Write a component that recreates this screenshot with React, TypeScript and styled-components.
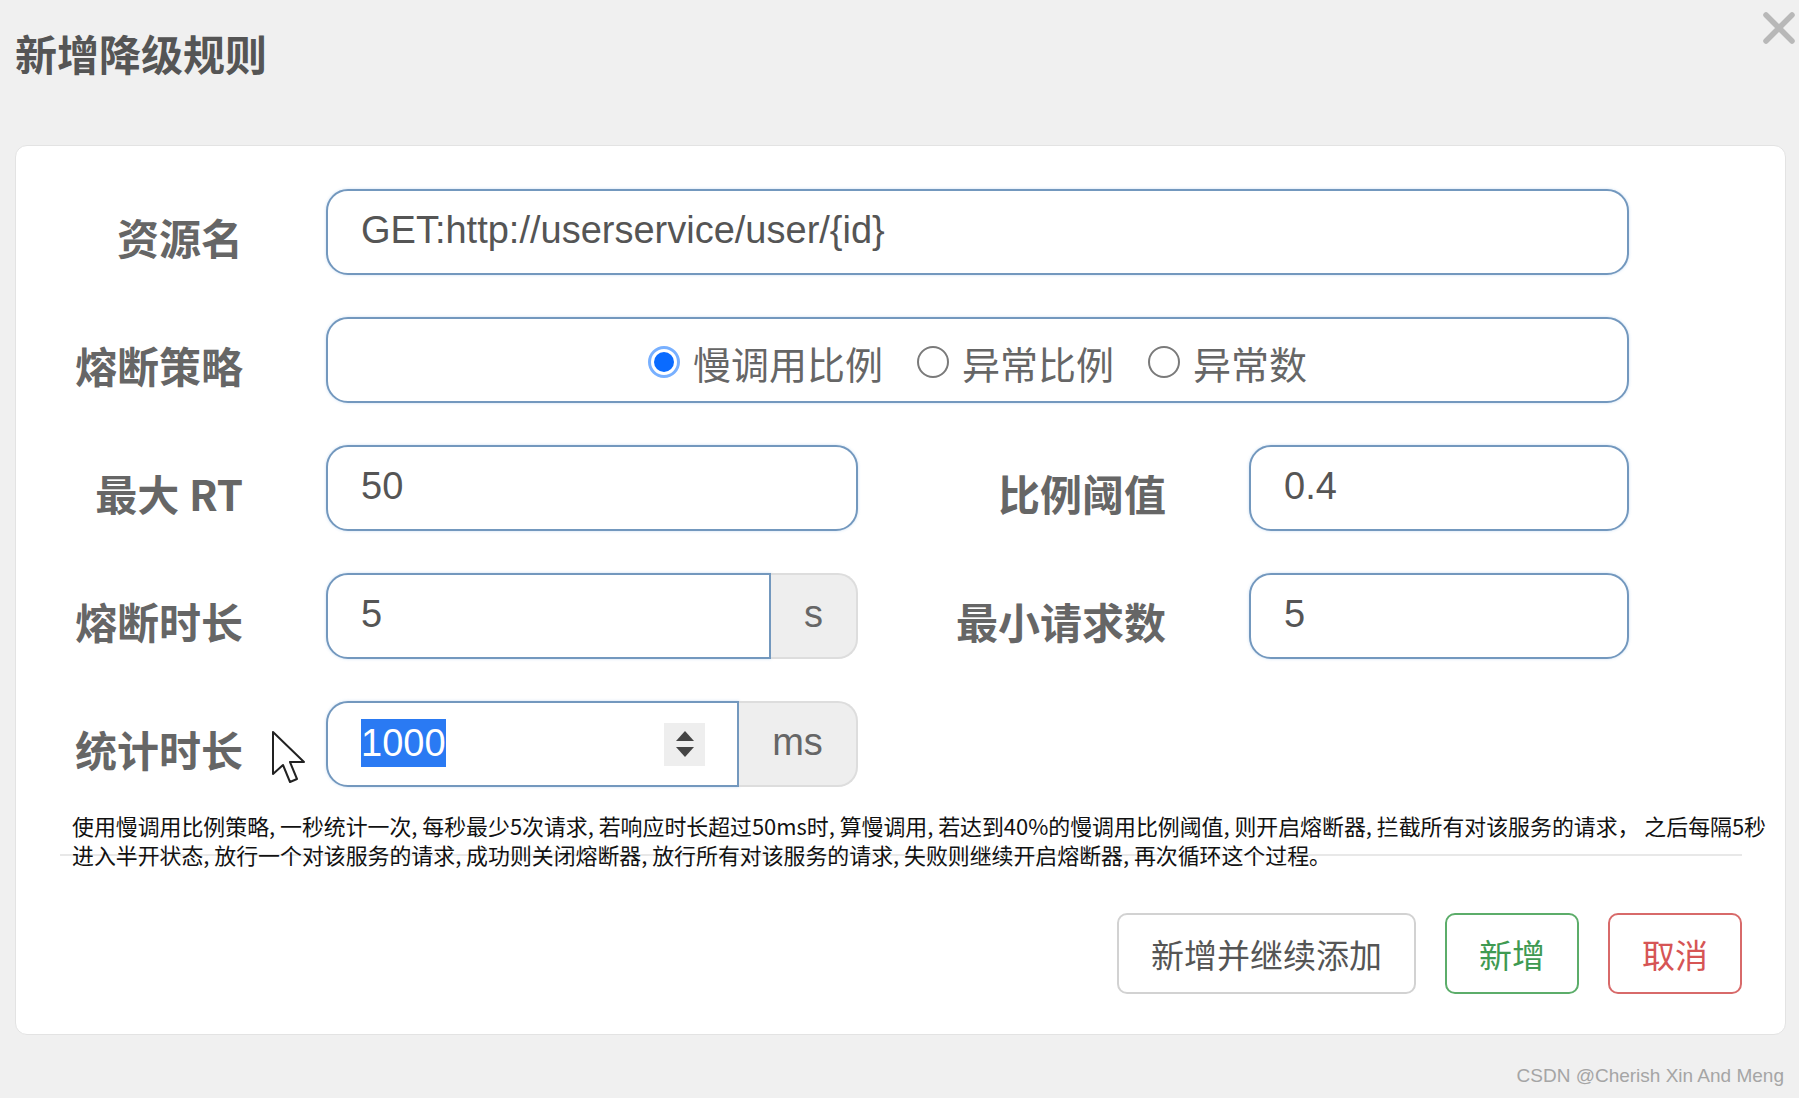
import React from "react";
import styled, { createGlobalStyle, css } from "styled-components";

const GlobalStyle = createGlobalStyle`
  html, body { margin: 0; padding: 0; background: #f0f0f0; }
  body {
    font-family: "Noto Sans CJK SC", "Noto Sans", sans-serif;
    width: 1799px;
    height: 1098px;
    overflow: hidden;
  }
  * { box-sizing: border-box; }
`;

const Page = styled.div`
  display: flex;
  flex-direction: column;
  height: 1098px;
`;

const Header = styled.header`
  display: flex;
  justify-content: space-between;
  align-items: flex-start;
  height: 145px;
  padding: 11px 3px 0 15px;
`;

const Title = styled.h1`
  margin: 20px 0 0;
  font-size: 42px;
  line-height: 44px;
  font-weight: 700;
  color: #555;
`;

const CloseButton = styled.button`
  width: 34px;
  height: 34px;
  padding: 0;
  border: 0;
  background: none;
  display: flex;
  cursor: pointer;
`;

const Card = styled.section`
  margin: 0 13px 0 15px;
  background: #fff;
  border: 1px solid #e3e3e3;
  border-radius: 12px;
  padding: 43px 43px 40px 0;
  display: flex;
  flex-direction: column;
`;

const Form = styled.div`
  display: flex;
  flex-direction: column;
  gap: 42px;
  margin-right: 113px;
`;

const FormRow = styled.div`
  position: relative;
  display: grid;
  grid-template-columns: 227px 532px 1fr 380px;
  column-gap: 83px;
  align-items: center;
  height: 86px;
`;

const Label = styled.label`
  text-align: right;
  font-size: 42px;
  line-height: 42px;
  font-weight: 700;
  color: #666;
  padding-top: 10px;
  white-space: nowrap;
`;

const fieldBase = css`
  height: 86px;
  border: 2px solid #7398be;
  background: #fff;
  display: flex;
  align-items: center;
  font-family: "Liberation Sans", "Noto Sans CJK SC", sans-serif;
  font-size: 38px;
  color: #555;
  box-shadow: 0 0 3px rgba(102, 160, 220, 0.35);
`;

const Field = styled.div<{ $wide?: boolean }>`
  ${fieldBase};
  border-radius: 22px;
  padding: 0 33px 3px;
  ${(p) => p.$wide && css`grid-column: 2 / -1;`}
`;

const InputGroup = styled.div`
  display: flex;
  height: 86px;
`;

const GroupField = styled.div`
  ${fieldBase};
  flex: 1;
  border-radius: 22px 0 0 22px;
  padding: 0 32px 3px 33px;
`;

const Addon = styled.div<{ $w: number }>`
  width: ${(p) => p.$w}px;
  height: 86px;
  background: #eee;
  border: 2px solid #ddd;
  border-left: 0;
  border-radius: 0 20px 20px 0;
  display: flex;
  align-items: center;
  justify-content: center;
  padding-bottom: 3px;
  font-family: "Liberation Sans", sans-serif;
  font-size: 38px;
  color: #666;
`;

const Selected = styled.span`
  background: #2a7af3;
  color: #fff;
  padding: 2px 0;
  line-height: 44px;
`;

const Spinner = styled.div`
  margin-left: auto;
  margin-top: 3px;
  width: 41px;
  height: 43px;
  background: #eee;
  display: flex;
  align-items: center;
  justify-content: center;
`;

const RadioGroup = styled(Field)`
  justify-content: center;
  gap: 34px;
  padding-bottom: 0;
  font-family: "Noto Sans CJK SC", sans-serif;
  color: #666;
`;

const RadioItem = styled.span`
  display: flex;
  align-items: center;
  gap: 13px;
  font-size: 38px;
  line-height: 44px;
`;

const RadioText = styled.span`
  padding-top: 6px;
`;

const RadioMark = styled.span<{ $on?: boolean }>`
  position: relative;
  width: 32px;
  height: 32px;
  margin-top: 3px;
  border-radius: 50%;
  background: #fff;
  border: ${(p) => (p.$on ? "3px solid #78b0ff" : "2px solid #7a7a7a")};
  ${(p) =>
    p.$on &&
    css`
      &::after {
        content: "";
        position: absolute;
        left: 3px;
        top: 3px;
        width: 20px;
        height: 20px;
        border-radius: 50%;
        background: #0a6bff;
      }
    `}
`;

const Pointer = styled.svg`
  position: absolute;
  left: 255px;
  top: 29px;
`;

const Help = styled.div`
  margin: 10px 0 0 44px;
  height: 59px;
  border-bottom: 2px solid #e8e8e8;
  padding: 14px 0 0 12px;
  font-size: 21.9px;
  line-height: 29px;
  color: #111;
  white-space: nowrap;
`;

const Actions = styled.div`
  display: flex;
  justify-content: flex-end;
  gap: 29px;
  margin-top: 57px;
`;

const tones = {
  plain: { border: "#d2d2d2", color: "#555" },
  ok: { border: "#5cad6a", color: "#3f9a52" },
  cancel: { border: "#d86a6a", color: "#d65555" },
};

const Button = styled.button<{ $tone: keyof typeof tones }>`
  height: 81px;
  padding: 0 32px;
  background: #fff;
  border: 2px solid ${(p) => tones[p.$tone].border};
  color: ${(p) => tones[p.$tone].color};
  border-radius: 10px;
  font-family: "Noto Sans CJK SC", sans-serif;
  font-size: 33px;
  cursor: pointer;
`;

const Watermark = styled.div`
  padding: 29px 15px 0 0;
  text-align: right;
  font-family: "Liberation Sans", sans-serif;
  font-size: 19px;
  line-height: 24px;
  color: #a5a5a5;
`;

const SpinIcon = () => (
  <svg width="22" height="32" viewBox="0 0 22 32">
    <path d="M11 3 L20 13 L2 13 Z" fill="#444" />
    <path d="M2 19 L20 19 L11 29 Z" fill="#444" />
  </svg>
);

export default function App() {
  return (
    <>
      <GlobalStyle />
      <Page>
        <Header>
          <Title>新增降级规则</Title>
          <CloseButton aria-label="close">
            <svg width="34" height="34" viewBox="0 0 34 34">
              <path d="M4 4 L30 30 M30 4 L4 30" stroke="#b8b8b8" strokeWidth="5.5" strokeLinecap="round" />
            </svg>
          </CloseButton>
        </Header>
        <Card>
          <Form>
            <FormRow>
              <Label>资源名</Label>
              <Field $wide>GET:http://userservice/user/{"{id}"}</Field>
            </FormRow>
            <FormRow>
              <Label>熔断策略</Label>
              <RadioGroup $wide>
                <RadioItem>
                  <RadioMark $on />
                  <RadioText>慢调用比例</RadioText>
                </RadioItem>
                <RadioItem>
                  <RadioMark />
                  <RadioText>异常比例</RadioText>
                </RadioItem>
                <RadioItem>
                  <RadioMark />
                  <RadioText>异常数</RadioText>
                </RadioItem>
              </RadioGroup>
            </FormRow>
            <FormRow>
              <Label>最大 RT</Label>
              <Field>50</Field>
              <Label>比例阈值</Label>
              <Field>0.4</Field>
            </FormRow>
            <FormRow>
              <Label>熔断时长</Label>
              <InputGroup>
                <GroupField>5</GroupField>
                <Addon $w={87}>s</Addon>
              </InputGroup>
              <Label>最小请求数</Label>
              <Field>5</Field>
            </FormRow>
            <FormRow>
              <Label>统计时长</Label>
              <InputGroup>
                <GroupField>
                  <Selected>1000</Selected>
                  <Spinner>
                    <SpinIcon />
                  </Spinner>
                </GroupField>
                <Addon $w={119}>ms</Addon>
              </InputGroup>
              <Pointer width="38" height="56" viewBox="0 0 38 56">
                <path
                  d="M2 2 L2 44 L12 35 L19 52 L26 49 L19 32 L33 32 Z"
                  fill="#fff"
                  stroke="#222"
                  strokeWidth="2"
                  strokeLinejoin="round"
                />
              </Pointer>
            </FormRow>
          </Form>
          <Help>
            使用慢调用比例策略, 一秒统计一次, 每秒最少5次请求, 若响应时长超过50ms时, 算慢调用, 若达到40%的慢调用比例阈值, 则开启熔断器, 拦截所有对该服务的请求， 之后每隔5秒
            <br />
            进入半开状态, 放行一个对该服务的请求, 成功则关闭熔断器, 放行所有对该服务的请求, 失败则继续开启熔断器, 再次循环这个过程。
          </Help>
          <Actions>
            <Button $tone="plain">新增并继续添加</Button>
            <Button $tone="ok">新增</Button>
            <Button $tone="cancel">取消</Button>
          </Actions>
        </Card>
        <Watermark>CSDN @Cherish Xin And Meng</Watermark>
      </Page>
    </>
  );
}
